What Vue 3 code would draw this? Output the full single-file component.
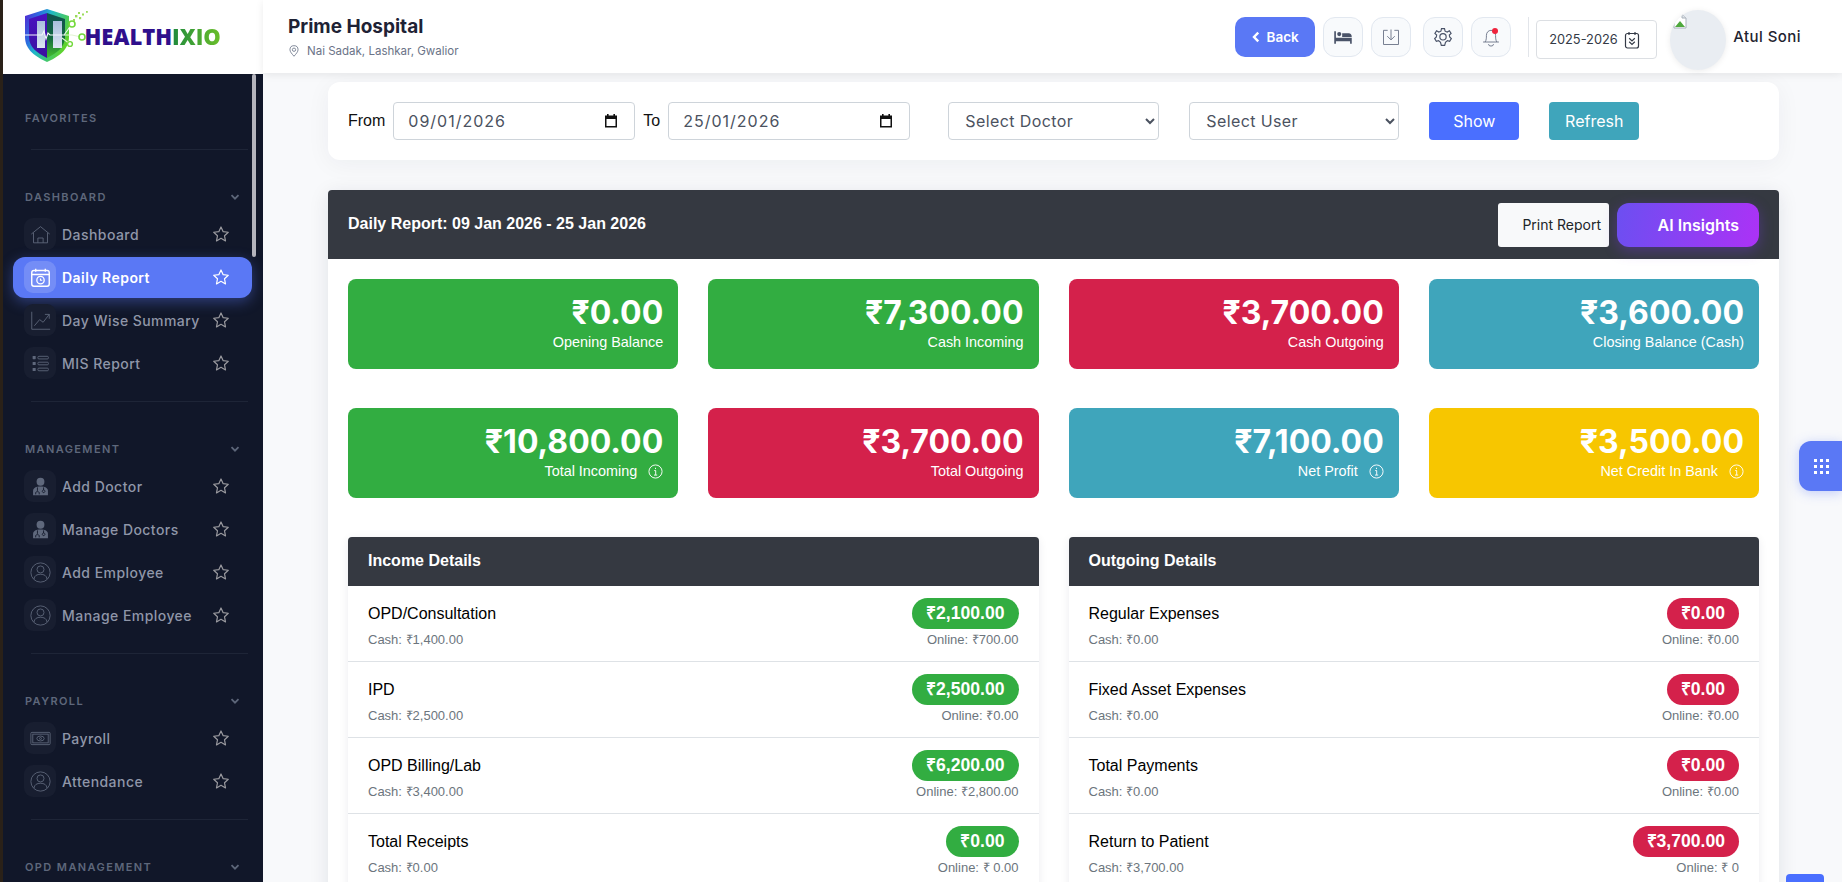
<script setup>
const nav = [
  { title: 'FAVORITES', chevron: false, items: [] },
  { title: 'DASHBOARD', chevron: true, items: [
    { label: 'Dashboard', icon: 'home' },
    { label: 'Daily Report', icon: 'calendar', active: true },
    { label: 'Day Wise Summary', icon: 'chart' },
    { label: 'MIS Report', icon: 'list' }
  ] },
  { title: 'MANAGEMENT', chevron: true, items: [
    { label: 'Add Doctor', icon: 'doctor' },
    { label: 'Manage Doctors', icon: 'doctor' },
    { label: 'Add Employee', icon: 'user' },
    { label: 'Manage Employee', icon: 'user' }
  ] },
  { title: 'PAYROLL', chevron: true, items: [
    { label: 'Payroll', icon: 'money' },
    { label: 'Attendance', icon: 'user' }
  ] },
  { title: 'OPD MANAGEMENT', chevron: true, items: [] }
]

const stats = [
  { value: '₹0.00', label: 'Opening Balance', tone: 'green' },
  { value: '₹7,300.00', label: 'Cash Incoming', tone: 'green' },
  { value: '₹3,700.00', label: 'Cash Outgoing', tone: 'red' },
  { value: '₹3,600.00', label: 'Closing Balance (Cash)', tone: 'teal' },
  { value: '₹10,800.00', label: 'Total Incoming', tone: 'green', info: true },
  { value: '₹3,700.00', label: 'Total Outgoing', tone: 'red' },
  { value: '₹7,100.00', label: 'Net Profit', tone: 'teal', info: true },
  { value: '₹3,500.00', label: 'Net Credit In Bank', tone: 'yellow', info: true }
]

const sections = [
  { title: 'Income Details', tone: 'green', rows: [
    { name: 'OPD/Consultation', amount: '₹2,100.00', cash: 'Cash: ₹1,400.00', online: 'Online: ₹700.00' },
    { name: 'IPD', amount: '₹2,500.00', cash: 'Cash: ₹2,500.00', online: 'Online: ₹0.00' },
    { name: 'OPD Billing/Lab', amount: '₹6,200.00', cash: 'Cash: ₹3,400.00', online: 'Online: ₹2,800.00' },
    { name: 'Total Receipts', amount: '₹0.00', cash: 'Cash: ₹0.00', online: 'Online: ₹ 0.00' }
  ] },
  { title: 'Outgoing Details', tone: 'red', rows: [
    { name: 'Regular Expenses', amount: '₹0.00', cash: 'Cash: ₹0.00', online: 'Online: ₹0.00' },
    { name: 'Fixed Asset Expenses', amount: '₹0.00', cash: 'Cash: ₹0.00', online: 'Online: ₹0.00' },
    { name: 'Total Payments', amount: '₹0.00', cash: 'Cash: ₹0.00', online: 'Online: ₹0.00' },
    { name: 'Return to Patient', amount: '₹3,700.00', cash: 'Cash: ₹3,700.00', online: 'Online: ₹ 0' }
  ] }
]
</script>

<template>
  <div class="page">
    <div class="edge"></div>

    <aside class="sidebar">
      <div class="logo">
        <svg class="shield" viewBox="0 0 70 62" width="70" height="62">
          <defs>
            <linearGradient id="shieldRim" x1="0" y1="0" x2="1" y2="0.5">
              <stop offset="0" stop-color="#5a1fd1" />
              <stop offset="0.3" stop-color="#2b6fe0" />
              <stop offset="0.5" stop-color="#1fb8c8" />
              <stop offset="1" stop-color="#5fd32c" />
            </linearGradient>
            <linearGradient id="shieldLeft" x1="0" y1="0" x2="0" y2="1">
              <stop offset="0" stop-color="#4a12c0" />
              <stop offset="1" stop-color="#3a10a0" />
            </linearGradient>
            <linearGradient id="shieldRight" x1="0" y1="0" x2="0" y2="1">
              <stop offset="0" stop-color="#0f4f52" />
              <stop offset="0.55" stop-color="#12683f" />
              <stop offset="1" stop-color="#45c02e" />
            </linearGradient>
            <linearGradient id="panel" x1="0" y1="0" x2="0" y2="1">
              <stop offset="0" stop-color="#a8bedc" />
              <stop offset="1" stop-color="#dce6f2" />
            </linearGradient>
          </defs>
          <path d="M27 5 L49 12 V33 C49 46 38 53 27 58 C16 53 5 46 5 33 V12 Z" fill="url(#shieldRim)" />
          <path d="M27 9 V54 C17 49 9 43 9 33 V15 Z" fill="url(#shieldLeft)" />
          <path d="M27 9 L45 15 V33 C45 43 37 49 27 54 Z" fill="url(#shieldRight)" />
          <rect x="17" y="17" width="8" height="27" fill="url(#panel)" />
          <rect x="33" y="17" width="9" height="27" fill="url(#panel)" />
          <path d="M5 31 H22 L24 27 L26 35 L28 29 L30 31 H44 L52 20" fill="none" stroke="#f4f7fb" stroke-width="1.1" />
          <path d="M44 31 H52 L61 33 M42 34 L50 40" fill="none" stroke="#e2f5d2" stroke-width="1.1" />
          <circle cx="52" cy="20" r="3" fill="#fff" stroke="#72d83a" stroke-width="1.6" />
          <circle cx="62" cy="33" r="3" fill="#fff" stroke="#72d83a" stroke-width="1.6" />
          <circle cx="50" cy="40" r="2.4" fill="#fff" stroke="#72d83a" stroke-width="1.4" />
          <g fill="#9bdc5a">
            <rect x="55" y="11" width="2.4" height="2.4" />
            <rect x="59" y="13" width="2.2" height="2.2" />
            <rect x="58" y="8" width="2" height="2" />
            <rect x="62" y="9.5" width="2" height="2" />
            <rect x="66" y="7" width="1.8" height="1.8" />
            <rect x="53" y="15" width="2" height="2" />
          </g>
        </svg>
        <span class="logo-text">HEALTH<b>IXIO</b></span>
      </div>

      <div class="thumb"></div>

      <nav class="nav">
        <section v-for="(group, g) in nav" :key="group.title" class="group">
          <div class="group-title">
            <span>{{ group.title }}</span>
            <svg v-if="group.chevron" viewBox="0 0 10 10" width="10" height="10"><path d="M1.5 3.2 L5 6.7 L8.5 3.2" fill="none" stroke="#5d6679" stroke-width="1.8" /></svg>
          </div>
          <div v-for="item in group.items" :key="item.label" class="item" :class="{ active: item.active }">
            <span class="item-icon">
              <svg viewBox="0 0 24 24" width="24" height="24" fill="none" stroke="currentColor" stroke-width="1">
                <template v-if="item.icon === 'home'">
                  <path d="M1.5 11.5 L12 3 L22.5 11.5" />
                  <path d="M4 10 V21.5 H20 V10" />
                  <path d="M9 21.5 V16 H15 V21.5" />
                </template>
                <template v-else-if="item.icon === 'calendar'">
                  <rect x="2" y="4" width="20" height="18" rx="2.5" stroke-width="1.6" />
                  <path d="M2 8.5 H22 M6.5 2 V5.5 M17.5 2 V5.5" stroke-width="1.6" />
                  <circle cx="12" cy="15" r="4.2" stroke-width="1.5" />
                  <path d="M12 13 V15.2 H14" stroke-width="1.3" />
                </template>
                <template v-else-if="item.icon === 'chart'">
                  <path d="M2 2 V22 H23" />
                  <path d="M5 18 L11 11 L15 14 L22 5 M17 5 H22 V10" />
                </template>
                <template v-else-if="item.icon === 'list'">
                  <g fill="currentColor" stroke="none">
                    <rect x="3" y="3.5" width="3.5" height="3.5" rx=".6" />
                    <rect x="3" y="10.2" width="3.5" height="3.5" rx=".6" />
                    <rect x="3" y="17" width="3.5" height="3.5" rx=".6" />
                  </g>
                  <rect x="9" y="3.8" width="12" height="3" rx="1.2" />
                  <rect x="9" y="10.5" width="12" height="3" rx="1.2" />
                  <rect x="9" y="17.3" width="12" height="3" rx="1.2" />
                </template>
                <template v-else-if="item.icon === 'doctor'">
                  <circle cx="12" cy="6.5" r="4.5" fill="currentColor" stroke="none" />
                  <path d="M3.5 22 V17 C3.5 13.5 7 12 12 12 C17 12 20.5 13.5 20.5 17 V22 Z" fill="currentColor" stroke="none" />
                  <path d="M8.5 13 V17 M15.5 13 V16 M6.5 21 V19 C6.5 17.5 10.5 17.5 10.5 19 V21 M15.5 16 A1.5 1.5 0 1 0 15.6 16" stroke="#111729" stroke-width="1" />
                </template>
                <template v-else-if="item.icon === 'user'">
                  <circle cx="12" cy="12" r="11" />
                  <circle cx="12" cy="8.5" r="4" />
                  <path d="M4.5 19.5 C5 15.5 8 14 12 14 C16 14 19 15.5 19.5 19.5" />
                </template>
                <template v-else>
                  <rect x="1" y="5" width="22" height="14" rx="1.2" />
                  <rect x="3.2" y="7" width="17.6" height="10" />
                  <ellipse cx="12" cy="12" rx="4.2" ry="2.8" />
                  <circle cx="12" cy="12" r="1.1" />
                </template>
              </svg>
            </span>
            <span class="item-label">{{ item.label }}</span>
            <svg class="star" viewBox="0 0 24 24" width="18" height="18"><path d="M12 2.6 L14.9 8.9 L21.7 9.7 L16.7 14.4 L18 21.2 L12 17.8 L6 21.2 L7.3 14.4 L2.3 9.7 L9.1 8.9 Z" fill="none" stroke="currentColor" stroke-width="1.6" stroke-linejoin="round" /></svg>
          </div>
          <div v-if="g < nav.length - 1" class="rule"></div>
        </section>
      </nav>
    </aside>

    <div class="main">
      <header class="topbar">
        <div class="hospital">
          <h1>Prime Hospital</h1>
          <p>
            <svg viewBox="0 0 16 16" width="12" height="12" fill="none" stroke="#6b7488" stroke-width="1.1"><path d="M8 15 C5 11.5 2.6 9 2.6 6.3 A5.4 5.4 0 0 1 13.4 6.3 C13.4 9 11 11.5 8 15 Z" /><circle cx="8" cy="6.3" r="2.2" /></svg>
            <span>Nai Sadak, Lashkar, Gwalior</span>
          </p>
        </div>
        <div class="tools">
          <button class="back">
            <svg viewBox="0 0 10 14" width="8" height="12"><path d="M7.8 1.5 L2.5 7 L7.8 12.5" fill="none" stroke="#fff" stroke-width="3" /></svg>
            <span>Back</span>
          </button>
          <span class="tool">
            <svg viewBox="0 0 24 24" width="20" height="20"><path d="M1.5 5 H3.5 V13 H22.5 V20 H20.5 V17 H3.5 V20 H1.5 Z M5 8.5 A2.5 2.5 0 1 1 10 8.5 A2.5 2.5 0 1 1 5 8.5 Z M11 7.5 H19 C21 7.5 22.5 9 22.5 12 H11 Z" fill="#4a5368" /></svg>
          </span>
          <span class="tool">
            <svg viewBox="0 0 24 24" width="20" height="20" fill="none" stroke="#6b7488" stroke-width="1.1"><path d="M8 4 H3 V21 H21 V4 H16" /><path d="M12 3 V15 M7.5 11 L12 15.5 L16.5 11" /></svg>
          </span>
          <span class="tool gap-left">
            <svg viewBox="0 0 24 24" width="20" height="20" fill="none" stroke="#4a5368" stroke-width="1.4"><path d="M10.2 2 H13.8 L14.5 5 L17 6 L19.7 4.5 L21.7 7.6 L19.6 9.6 L20 12 L22 14 L20 17.2 L17.3 16.4 L15 18.4 L14 22 H10 L9 18.4 L6.7 16.4 L4 17.2 L2 14 L4 12 L4.4 9.6 L2.3 7.6 L4.3 4.5 L7 6 L9.5 5 Z" /><circle cx="12" cy="11.8" r="3.8" /></svg>
          </span>
          <span class="tool bell">
            <svg viewBox="0 0 24 24" width="20" height="20" fill="none" stroke="#6b7488" stroke-width="1.1"><path d="M2.5 18 H21.5 M5 18 C6.5 15.5 6.5 13 6.5 10 C6.5 6.5 9 4 12 4 C15 4 17.5 6.5 17.5 10 C17.5 13 17.5 15.5 19 18" /><path d="M9 20.5 A3 2.4 0 0 0 15 20.5" /></svg>
            <i class="dot"></i>
          </span>
          <span class="divider"></span>
          <span class="year">
            <span>2025-2026</span>
            <svg viewBox="0 0 16 18" width="16" height="18" fill="none" stroke="#343a46" stroke-width="1.2"><rect x="1.5" y="2.5" width="13" height="14.5" rx="2" /><path d="M5 1 V4 M11 1 V4" /><path d="M5.2 7.3 L8 10 L10.8 7.3 M5.2 10.8 L8 13.5 L10.8 10.8" /></svg>
          </span>
          <span class="avatar">
            <svg viewBox="0 0 16 16" width="16" height="16"><path d="M2 1 H10 L14 5 V15 H2 Z" fill="#fff" stroke="#aab2bb" /><path d="M3 14 L8 8 L13 14 Z" fill="#4fa83d" /><path d="M10 1 V5 H14" fill="#dfe4ea" stroke="#aab2bb" /></svg>
          </span>
          <span class="user-name">Atul Soni</span>
        </div>
      </header>

      <main class="content">
        <div class="filters">
          <label class="field-label">From</label>
          <span class="date">
            <span>09/01/2026</span>
            <svg viewBox="0 0 16 16" width="16" height="16"><path d="M4 1 H5.6 V2.6 H10.4 V1 H12 V2.6 H14 V14.5 H2 V2.6 H4 Z M3.5 6 V13 H12.5 V6 Z" fill="#111" /></svg>
          </span>
          <label class="field-label to">To</label>
          <span class="date">
            <span>25/01/2026</span>
            <svg viewBox="0 0 16 16" width="16" height="16"><path d="M4 1 H5.6 V2.6 H10.4 V1 H12 V2.6 H14 V14.5 H2 V2.6 H4 Z M3.5 6 V13 H12.5 V6 Z" fill="#111" /></svg>
          </span>
          <select class="pick first"><option>Select Doctor</option></select>
          <select class="pick"><option>Select User</option></select>
          <button class="btn show">Show</button>
          <button class="btn refresh">Refresh</button>
        </div>

        <div class="report">
          <div class="report-head">
            <span class="report-title">Daily Report: 09 Jan 2026 - 25 Jan 2026</span>
            <div class="report-actions">
              <button class="print">Print Report</button>
              <button class="ai">AI Insights</button>
            </div>
          </div>
          <div class="report-body">
            <div class="stats">
              <div v-for="s in stats" :key="s.label" class="stat" :class="s.tone">
                <div class="stat-value">{{ s.value }}</div>
                <div class="stat-label">
                  <span>{{ s.label }}</span>
                  <svg v-if="s.info" viewBox="0 0 16 16" width="15" height="15" fill="none" stroke="#fff" stroke-width="1"><circle cx="8" cy="8" r="7" /><path d="M6.6 7 H8.2 V11.6 M6.4 11.8 H9.8 M8 4 V5.4" /></svg>
                </div>
              </div>
            </div>
            <div class="details">
              <div v-for="sec in sections" :key="sec.title" class="detail">
                <div class="detail-head">{{ sec.title }}</div>
                <div v-for="r in sec.rows" :key="r.name" class="row">
                  <div class="row-top">
                    <span class="row-name">{{ r.name }}</span>
                    <span class="pill" :class="sec.tone">{{ r.amount }}</span>
                  </div>
                  <div class="row-sub">
                    <span>{{ r.cash }}</span>
                    <span>{{ r.online }}</span>
                  </div>
                </div>
              </div>
            </div>
          </div>
        </div>
      </main>
    </div>

    <button class="float-menu" aria-label="Menu">
      <i v-for="n in 9" :key="n"></i>
    </button>
    <span class="to-top"></span>
  </div>
</template>

<style>
html, body { margin: 0; overflow: hidden; }
</style>

<style scoped>
.page {
  display: flex;
  position: relative;
  width: 1842px;
  height: 882px;
  overflow: hidden;
  background: #f8f9fb;
  font-family: "Liberation Sans", Arial, sans-serif;
}
.edge { width: 3px; flex: none; background: #2a2118; }

/* sidebar */
.sidebar {
  position: relative;
  width: 260px;
  flex: none;
  background: #111729;
  display: flex;
  flex-direction: column;
  overflow: hidden;
  font-family: Inter, sans-serif;
}
.logo {
  height: 74px;
  flex: none;
  background: #fff;
  display: flex;
  align-items: center;
  padding: 0 0 0 17px;
}
.shield { flex: none; margin-top: -4px; }
.logo-text {
  font-family: "Open Sans", sans-serif;
  font-weight: 800;
  font-size: 22px;
  color: #2f0f8c;
  margin: -3px 0 0 -5.5px;
}
.logo-text b {
  font-weight: 800;
  background: linear-gradient(90deg, #1f8a3c, #6bbf2a);
  -webkit-background-clip: text;
  background-clip: text;
  color: transparent;
}
.thumb {
  position: absolute;
  left: 249px;
  top: 74px;
  width: 4px;
  height: 183px;
  background: #b4b4bc;
  border-radius: 2px;
}
.nav { padding: 34px 11px 0 10px; }
.group-title {
  display: flex;
  justify-content: space-between;
  align-items: center;
  height: 20px;
  padding: 0 11px 0 12px;
  font-size: 11px;
  font-weight: 600;
  letter-spacing: 1.4px;
  color: #5e677b;
}
.group-title svg { margin-right: 1px; }
.item {
  display: flex;
  align-items: center;
  height: 41px;
  margin-bottom: 2px;
  padding: 0 11px;
  border-radius: 12px;
  color: #8f96a8;
  font-size: 14px;
  font-weight: 500;
  letter-spacing: 0.45px;
}
.group-title + .item { margin-top: 6.5px; }
.item.active {
  background: #5a78f5;
  color: #fff;
  font-weight: 600;
  box-shadow: 0 4px 14px rgba(90, 120, 245, 0.4);
}
.item-icon {
  width: 32px;
  height: 32px;
  flex: none;
  margin-right: 6px;
  border-radius: 9px;
  background: #181e30;
  display: flex;
  align-items: center;
  justify-content: center;
  color: #5f687c;
}
.item-icon svg { width: 21px; height: 21px; }
.item.active .item-icon { background: rgba(255, 255, 255, 0.16); color: #fff; }
.item-label { flex: 1; white-space: nowrap; }
.star { color: #9a9a9f; flex: none; margin-right: 11px; }
.item.active .star { color: #fff; }
.rule { height: 1px; background: #1e2537; margin: 17.5px 4px 37px 18px; }
.group:first-child .rule { margin-top: 21px; }

/* main */
.main { flex: 1; min-width: 0; display: flex; flex-direction: column; }
.topbar {
  height: 73px;
  flex: none;
  background: #fff;
  display: flex;
  align-items: center;
  justify-content: space-between;
  padding: 0 0 0 25px;
  box-shadow: 0 2px 8px rgba(0, 0, 0, 0.08);
  position: relative;
  font-family: Inter, sans-serif;
}
.hospital h1 { margin: 0; font-size: 19px; font-weight: 700; color: #1e2235; line-height: 24px; }
.hospital p { margin: 5px 0 0; display: flex; align-items: center; gap: 7px; font-size: 11.52px; color: #6b7488; line-height: 14px; }
.tools { display: flex; align-items: center; }
.back {
  width: 80px;
  height: 40px;
  display: flex;
  align-items: center;
  justify-content: center;
  gap: 7px;
  border: 0;
  border-radius: 10px;
  background: #5a78f5;
  color: #fff;
  font: 600 13.5px Inter, sans-serif;
}
.tool {
  position: relative;
  width: 40px;
  height: 40px;
  box-sizing: border-box;
  margin-left: 8px;
  background: #f8fafc;
  border: 1px solid #e2e8f0;
  border-radius: 12px;
  display: flex;
  align-items: center;
  justify-content: center;
}
.gap-left { margin-left: 12px; }
.dot { position: absolute; top: 10px; right: 12px; width: 6px; height: 6px; border-radius: 50%; background: #ef233c; }
.divider { width: 1px; height: 40px; background: #e2e5ea; margin: 0 7px 0 17px; }
.year {
  width: 121px;
  height: 39px;
  box-sizing: border-box;
  border: 1px solid #dcdfe3;
  border-radius: 4px;
  margin-top: 6px;
  padding-left: 12px;
  display: flex;
  align-items: center;
  gap: 6px;
  font-size: 12.8px;
  color: #343a46;
}
.avatar {
  position: relative;
  width: 56px;
  height: 60px;
  margin: 6px 0 0 13px;
  border-radius: 50%;
  overflow: hidden;
  background: #e9edf2;
  box-shadow: 0 1px 6px rgba(0, 0, 0, 0.08);
}
.avatar svg { position: absolute; left: 2px; top: 3px; }
.user-name { margin: 0 41px 0 7px; font-size: 15px; font-weight: 500; letter-spacing: 0.45px; color: #1f2430; white-space: nowrap; }

.content { flex: 1; padding: 9px 63px 0 65px; min-height: 0; overflow: hidden; }
.filters {
  display: flex;
  align-items: center;
  height: 78px;
  box-sizing: border-box;
  padding: 0 20px;
  background: #fff;
  border-radius: 12px;
  box-shadow: 0 4px 24px rgba(20, 30, 60, 0.05);
}
.field-label { font-size: 16px; color: #111; margin-right: 8px; }
.field-label.to { margin: 0 8px; }
.date {
  width: 242px;
  height: 38px;
  box-sizing: border-box;
  border: 1px solid #ced4da;
  border-radius: 4px;
  padding: 0 15px 0 14px;
  display: flex;
  align-items: center;
  justify-content: space-between;
  font: 400 16px Inter, sans-serif;
  letter-spacing: 1px;
  color: #4b5260;
}
.pick {
  width: 210px;
  height: 38px;
  margin-left: 30px;
  border: 1px solid #ced4da;
  border-radius: 4px;
  background: #fff;
  padding: 0 12px;
  font: 400 16px Inter, sans-serif;
  letter-spacing: 0.4px;
  color: #4b5260;
}
.pick.first { width: 211px; margin-left: 38px; }
.btn {
  width: 90px;
  height: 38px;
  margin-left: 30px;
  border: 0;
  border-radius: 4px;
  color: #fff;
  font: 400 16px Inter, sans-serif;
}
.show { background: #4a6fff; }
.refresh { background: #3fa5bb; }

.report {
  margin-top: 30px;
  background: #fff;
  border-radius: 4px 4px 0 0;
  box-shadow: 0 4px 20px rgba(20, 30, 60, 0.1);
}
.report-head {
  height: 69px;
  background: #353941;
  border-radius: 4px 4px 0 0;
  display: flex;
  align-items: center;
  justify-content: space-between;
  padding: 0 20px;
}
.report-title { font-size: 16px; font-weight: 700; color: #fff; margin-top: -2px; }
.report-actions { display: flex; gap: 8px; }
.print {
  width: 111px;
  height: 44px;
  border: 0;
  border-radius: 3px;
  background: #f8f9fa;
  color: #212529;
  padding: 0 8px 0 0;
  text-align: right;
  font: 400 14px Inter, sans-serif;
}
.ai {
  width: 142px;
  height: 44px;
  border: 0;
  border-radius: 12px;
  background: linear-gradient(100deg, #6c4ff1, #ac32f6);
  color: #fff;
  padding: 0 20px 0 0;
  text-align: right;
  font: 600 16px Inter, sans-serif;
  box-shadow: 0 4px 14px rgba(124, 58, 237, 0.35);
}
.report-body { padding: 20px; }
.stats {
  display: grid;
  grid-template-columns: repeat(4, 1fr);
  gap: 39px 30px;
}
.stat {
  height: 90px;
  box-sizing: border-box;
  border-radius: 8px;
  padding: 13px 15px 0;
  color: #fff;
  text-align: right;
}
.green { background: #32ad41; }
.red { background: #d4214b; }
.teal { background: #3fa5bb; }
.yellow { background: #f7c600; }
.stat-value { font: 700 32px/41px Inter, sans-serif; }
.stat-label { display: flex; justify-content: flex-end; align-items: center; gap: 11px; font-size: 14.4px; line-height: 18px; }
.details {
  display: grid;
  grid-template-columns: 1fr 1fr;
  gap: 30px;
  margin-top: 39px;
}
.detail { box-shadow: 0 2px 10px rgba(20, 30, 60, 0.08); border-radius: 4px 4px 0 0; }
.detail-head {
  height: 49px;
  display: flex;
  align-items: center;
  padding: 0 20px 2px;
  box-sizing: border-box;
  background: #353941;
  color: #fff;
  font-size: 16px;
  font-weight: 700;
  border-radius: 4px 4px 0 0;
}
.row {
  height: 76px;
  box-sizing: border-box;
  padding: 12px 20px 0;
  border-bottom: 1px solid #dee2e6;
}
.row-top { display: flex; justify-content: space-between; align-items: center; height: 31px; }
.row-name { font-size: 16px; color: #000; }
.pill {
  height: 31px;
  line-height: 31px;
  padding: 0 14px;
  border-radius: 16px;
  color: #fff;
  font-size: 17.6px;
  font-weight: 700;
}
.row-sub {
  display: flex;
  justify-content: space-between;
  margin-top: 2.5px;
  font-size: 13px;
  line-height: 16px;
  color: #6c757d;
}

.float-menu {
  position: absolute;
  right: 0;
  top: 441px;
  width: 43px;
  height: 50px;
  border: 0;
  padding: 0 0 0 2px;
  border-radius: 12px 0 0 12px;
  background: #5a78f5;
  box-shadow: 0 2px 12px rgba(90, 120, 245, 0.35);
  display: grid;
  grid-template-columns: repeat(3, 3px);
  grid-auto-rows: 3px;
  gap: 3px;
  align-content: center;
  justify-content: center;
}
.float-menu i { background: #fff; }
.to-top {
  position: absolute;
  left: 1786px;
  top: 874px;
  width: 38px;
  height: 20px;
  border-radius: 4px;
  background: #4a6fff;
}
</style>
